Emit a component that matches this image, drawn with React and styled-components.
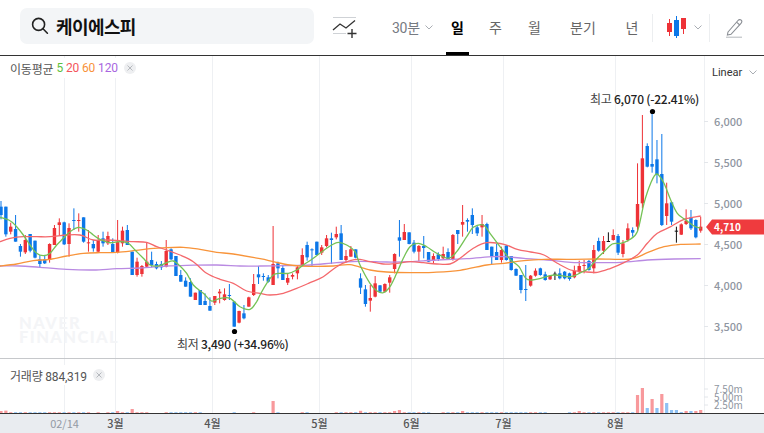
import React from 'react';
import styled, { createGlobalStyle } from 'styled-components';

const FONT = `"Noto Sans CJK KR", "Noto Sans", sans-serif`;
const UI_FONT = `Roboto, "Noto Sans CJK KR", sans-serif`;

const GlobalStyle = createGlobalStyle`
    html, body {
        margin: 0;
        padding: 0;
        background: #fff;
        overflow: hidden;
    }
    body {
        font-family: ${FONT};
    }
`;

const Page = styled.div`
    width: 764px;
    height: 433px;
    display: flex;
    flex-direction: column;
    overflow: hidden;
`;

const Header = styled.header`
    flex: none;
    display: flex;
    align-items: center;
    padding-left: 20px;
    box-sizing: border-box;
    border-bottom: 1px solid #333;
    height: 56px;
`;

const SearchBar = styled.div`
    width: 294px;
    height: 36px;
    margin-top: -4px;
    border-radius: 7px;
    background: #f3f5f7;
    display: flex;
    align-items: center;
    padding-left: 10px;
    gap: 6px;
    box-sizing: border-box;
`;

const SearchText = styled.span`
    font-size: 18px;
    font-weight: 700;
    color: #111;
    letter-spacing: -0.6px;
`;

const AddChart = styled.button`
    width: 26px;
    height: 24px;
    margin: 0 0 0 18px;
    padding: 0;
    border: 0;
    background: none;
    display: flex;
`;

const Interval = styled.div`
    margin: -1px 0 0 34px;
    width: 45.5px;
    flex: none;
    display: flex;
    align-items: center;
    gap: 5px;
    font-family: ${UI_FONT};
    font-size: 14px;
    color: #777b82;
    letter-spacing: -0.3px;
`;

const Tabs = styled.nav`
    display: flex;
    height: 100%;
`;

const Tab = styled.div`
    position: relative;
    width: ${p => p.$w}px;
    display: flex;
    justify-content: center;
    align-items: center;
    padding-bottom: 2px;
    box-sizing: border-box;
    font-size: 14px;
    font-weight: ${p => (p.$active ? 700 : 400)};
    color: ${p => (p.$active ? '#000' : '#666')};

    &::after {
        content: '';
        display: ${p => (p.$active ? 'block' : 'none')};
        position: absolute;
        left: 8.5px;
        right: 8.5px;
        bottom: 0;
        height: 3px;
        background: #000;
    }
`;

const Divider = styled.i`
    width: 1px;
    height: 28px;
    margin-left: ${p => p.$shift || 0}px;
    background: #eceef0;
    flex: none;
`;

const ChartType = styled.div`
    width: 56px;
    display: flex;
    align-items: center;
    padding-left: 14px;
    gap: 4px;
    box-sizing: border-box;
`;

const Pen = styled.div`
    margin: 0 0 0 15px;
    display: flex;
`;

const Chart = styled.main`
    position: relative;
    flex: 1;
    display: flex;
    flex-direction: column;
`;

const Pane = styled.svg`
    display: block;
    flex: none;
    width: 764px;
    height: ${p => p.$h}px;
`;

const Legend = styled.div`
    position: absolute;
    left: ${p => p.$left}px;
    top: ${p => p.$top}px;
    padding: 0 0 0 10px;
    height: 20px;
    display: flex;
    align-items: center;
    gap: 3px;
    font-family: ${UI_FONT};
    font-size: 12px;
    letter-spacing: -0.2px;
    color: #555;
    background: #fff;
`;

const LegendValue = styled.span`
    color: ${p => p.$color};
`;

const CloseDot = styled.span`
    width: 12px;
    height: 12px;
    margin-left: 3px;
    border-radius: 50%;
    background: #eeeff1;
    color: #b5b8bd;
    display: flex;
    align-items: center;
    justify-content: center;
`;

const ScaleSelect = styled.div`
    position: absolute;
    right: 0;
    top: 0;
    width: 59px;
    height: 25px;
    padding: 8px 0 0 7px;
    box-sizing: border-box;
    background: #fff;
    display: flex;
    align-items: center;
    gap: 7px;
    font-family: ${UI_FONT};
    font-size: 11px;
    color: #333;
`;

const Watermark = styled.div`
    position: absolute;
    left: 19px;
    top: 260px;
    font-family: "Lato", sans-serif;
    font-size: 16.5px;
    font-weight: 900;
    line-height: 14px;
    letter-spacing: 1.4px;
    color: #f4f5f7;
`;

const PriceLabel = styled.text`
    font-family: ${FONT};
    font-size: 11px;
    font-weight: 500;
    fill: #8f96a1;
`;

const VolumeLabel = styled.text`
    font-family: ${FONT};
    font-size: 10px;
    fill: #8f96a1;
`;

const Note = styled.text`
    font-family: ${FONT};
    font-size: 12px;
    font-weight: 500;
    letter-spacing: -0.25px;
    fill: #222;
`;

const NoteLead = styled.tspan`
    font-weight: 400;
    fill: #444;
`;

const TagText = styled.text`
    font-family: ${FONT};
    font-size: 10px;
    font-weight: 700;
    fill: #fff;
`;

const TimeAxis = styled.svg`
    display: block;
    width: 764px;
    height: 20px;
    background: #e9ecf0;
    border-top: 1px solid #333;
    box-sizing: border-box;
`;

const TimeLabel = styled.text`
    font-family: ${FONT};
    font-size: 11px;
    text-anchor: middle;
    font-weight: ${p => (p.$dim ? 400 : 500)};
    fill: ${p => (p.$dim ? '#949aa4' : '#555')};
`;

const UP = '#ee3237';
const DOWN = '#0c77e8';
const COLORS = { r: UP, b: DOWN, k: '#111' };

const GRID_X = [64.5, 115.5, 212.5, 319.5, 411.5, 503.5, 615.5];
const PRICES = [['6,000', 121.5], ['5,500', 162.5], ['5,000', 203.5], ['4,500', 244.5], ['4,000', 285.5], ['3,500', 326.5]];
const MONTHS = [['02/14', 64.5, true], ['3월', 115.5], ['4월', 212.5], ['5월', 319.5], ['6월', 411.5], ['7월', 503.5], ['8월', 615.5]];

// values read off the reference at 3x: colour, high, body top, body bottom, low
const SEG_A = [
    ['b',33,50,75,88],['b',50,50,133,140],['r',98,110,125,133],['b',75,117,155,155],['b',162,168,185,200],
    ['r',135,150,187,192],['b',132,132,182,187],['b',152,152,203,205],['b',195,208,222,232],['b',195,208,220,222],
    ['r',160,162,210,218],['r',105,114,165,165],['r',85,97,105,138],['b',95,97,163,165],['r',100,114,162,200],
    ['b',55,90,93,120],['r',70,90,93,125],['b',82,82,155,158],['r',120,157,160,185],['b',150,162,175,185],
    ['r',135,150,185,187],['b',125,145,160,170],['r',125,138,160,165],['b',145,162,187,187],['r',90,155,188,190],
    ['r',110,122,160,170],['b',105,120,165,165],['b',185,185,255,255],['r',203,215,255,260],['r',225,228,252,260],
    ['r',158,215,230,232],['b',185,210,225,232],['b',215,222,235,238],['b',213,222,232,240],['r',150,183,230,232],
    ['b',175,178,208,210],['b',198,198,258,258],['b',240,255,275,275],['b',262,272,290,290],['b',265,276,320,320],
    ['r',308,308,330,330],['b',300,300,345,345],['b',310,333,345,345],['b',322,348,362,362],['r',318,318,338,345],
    ['r',297,305,310,340],['r',295,313,330,332],['b',282,315,318,330],['b',335,335,410,410],['r',362,363,398,400],
    ['b',345,370,385,388],['r',320,322,350,350],['r',252,282,315,318],['b',228,253,262,282],
    ['b',250,258,260,272],['b',255,262,275,278],['r',108,222,285,285],['b',215,220,235,265],['b',225,234,270,270],
    ['r',250,264,278,285],['r',250,255,260,268],['r',225,232,250,268],['r',175,195,225,228],['b',155,165,202,212],
    ['b',175,178,180,228],['b',155,155,195,195],['r',165,172,188,195],['r',135,145,168,172],['b',128,145,150,222],
    ['r',110,132,142,148],['b',105,130,210,210],['r',180,198,210,218],['r',168,178,200,200],['b',178,178,203,205],
    ['b',250,265,293,312],['b',285,298,342,350],['r',285,324,332,365],['r',258,280,320,322],['b',285,286,305,308],
    ['r',280,282,305,308],['r',255,262,278,308],['r',190,192,237,250],['b',90,142,152,200],['r',102,126,150,150],
    ['b',127,127,162,163],['b',150,158,185,190],['r',165,168,185,213],['b',138,168,174,205],['b',186,186,215,216],
    ['r',190,198,213,220],['b',187,193,207,213],['r',170,192,205,208],['b',175,186,208,210],['r',132,135,208,212],
    ['b',120,120,132,162],['r',45,96,104,140],['b',85,90,95,125],['b',55,75,105,132],['b',108,112,130,138],
    ['r',75,102,112,140],['b',98,102,180,180],['b',170,170,200,222],['b',162,186,210,210],['r',170,180,210,218],
];
const SEG_B = [
    ['b',435,437,480,482],['b',468,468,510,512],['b',505,507,527,528],['b',525,525,570,580],['b',495,567,569,603],
    ['r',525,527,557,560],['r',505,512,527,530],['b',503,505,525,527],['b',515,523,540,542],['r',525,527,538,540],
    ['k',515,521,523,540],['b',505,520,535,538],['b',513,515,535,538],['b',518,520,537,542],['r',497,513,532,535],
    ['r',482,498,515,520],['r',480,495,497,520],['b',480,483,510,512],['r',435,450,505,520],['b',413,423,452,455],
    ['r',408,423,452,462],['k',397,423,425,425],['r',388,405,420,422],['b',402,408,458,465],['r',420,430,462,472],
    ['r',370,385,420,425],['b',382,390,398,410],['r',190,312,380,395],['r',45,175,310,325],['b',130,138,200,202],
    ['b',35,192,200,218],['b',120,178,225,250],['b',102,222,375,378],['r',248,310,348,375],['b',305,307,365,375],
    ['k',380,392,394,428],['r',370,373,404,405],['r',328,362,372,375],['b',330,352,385,390],['b',358,360,412,415],
    ['r',350,380,392,398],
];

const readRows = (rows, base) => rows.map(([c, h, t, b, l]) => ({
    color: c,
    high: base + h / 3,
    top: base + t / 3,
    bottom: base + b / 3,
    low: base + l / 3,
}));

const candles = [...readRows(SEG_A, 190), ...readRows(SEG_B, 100)].map((c, i) => ({ ...c, x: 1 + i * 4.859 }));

const pts = (list, ox, oy) => list.map(([x, y]) => [ox + x / 3, oy + y / 3]);

const MA5 = [
    ...pts([[0,82],[30,92],[50,110],[70,135],[90,165],[110,190],[130,197],[150,190],[170,165],[190,145],[210,125],[235,112],[260,120],[280,135],[300,148],[330,158],[360,155],[385,160],[405,180],[430,205],[450,225],[475,228],[500,218],[520,213],[540,228],[560,250],[580,285],[610,310],[635,333],[660,325],[690,325],[720,350],[750,358],[770,335]], 0, 190),
    ...pts([[0,315],[20,280],[40,255],[60,250],[85,250],[110,240],[130,225],[160,205],[190,182],[215,165],[235,157],[260,165],[285,185],[300,225],[330,280],[350,302],[370,308],[390,290],[410,250],[430,205],[450,170],[475,160],[500,170],[530,190],[565,205],[590,185],[620,140],[640,112],[670,105],[690,130],[720,170]], 260, 190),
    ...pts([[0,455],[20,480],[45,500],[65,535],[85,540],[110,535],[150,525],[200,530],[230,518],[255,505],[275,480],[300,455],[325,432],[350,430],[375,420],[400,395],[420,310],[440,250],[458,222],[480,250],[500,300],[520,340],[545,360],[570,378],[590,385]], 504, 100),
];
const MA20 = [
    ...pts([[0,155],[30,145],[70,140],[110,140],[150,140],[200,135],[240,135],[280,150],[320,150],[360,152],[400,155],[440,157],[470,170],[500,180],[540,195],[580,215],[620,250],[660,268],[700,280],[740,303]], 0, 190),
    ...pts([[0,310],[30,315],[70,310],[110,295],[150,278],[190,260],[230,230],[270,212],[300,208],[330,215],[370,222],[410,220],[450,215],[490,218],[530,222],[570,222],[600,205],[640,175],[680,158]], 260, 190),
    ...pts([[0,433],[40,448],[80,456],[120,465],[160,490],[200,510],[240,515],[280,517],[320,505],[360,488],[400,465],[430,430],[460,400],[500,380],[540,358],[590,348]], 504, 100),
];
const MA60 = [
    ...pts([[0,228],[50,222],[100,212],[150,208],[200,198],[250,190],[300,188],[350,187],[400,182],[450,176],[500,173],[550,172],[600,178],[650,187],[700,192]], 0, 190),
    ...pts([[0,206],[40,215],[90,225],[150,229],[220,228],[270,224],[330,240],[380,246],[450,248],[520,247],[600,241],[680,225]], 260, 190),
    ...pts([[0,490],[60,482],[120,478],[200,478],[280,477],[380,477],[430,458],[480,440],[530,433],[590,432]], 504, 100),
];
const MA120 = [
    ...pts([[0,228],[60,228],[120,232],[200,238],[280,240],[350,236],[420,234],[500,228],[560,226],[650,225],[720,228]], 0, 190),
    ...pts([[0,228],[80,227],[150,225],[230,218],[300,214],[380,216],[450,215],[530,210],[620,206],[700,200]], 260, 190),
    ...pts([[0,470],[60,475],[130,480],[200,487],[270,488],[350,487],[430,480],[510,477],[590,476]], 504, 100),
];

// catmull-rom through the read points
const smooth = list => {
    let d = `M${list[0][0].toFixed(1)} ${list[0][1].toFixed(1)}`;
    for (let i = 0; i < list.length - 1; i++) {
        const p0 = list[i - 1] || list[i];
        const p1 = list[i];
        const p2 = list[i + 1];
        const p3 = list[i + 2] || p2;
        const c1x = p1[0] + (p2[0] - p0[0]) / 6;
        const c1y = p1[1] + (p2[1] - p0[1]) / 6;
        const c2x = p2[0] - (p3[0] - p1[0]) / 6;
        const c2y = p2[1] - (p3[1] - p1[1]) / 6;
        d += `C${c1x.toFixed(1)} ${c1y.toFixed(1)} ${c2x.toFixed(1)} ${c2y.toFixed(1)} ${p2[0].toFixed(1)} ${p2[1].toFixed(1)}`;
    }
    return d;
};

const LINES = [
    [MA120, '#b98ae2'],
    [MA60, '#f8943a'],
    [MA20, '#f4686c'],
    [MA5, '#74c255'],
];

const VOL_GAPS = new Set([19, 21, 31, 32, 33, 42, 43, 44, 45, 46, 47, 49, 50, 51, 53, 54, 55, 58, 59, 60, 61, 64, 65, 66, 67, 68, 89, 90, 113, 114, 115, 116]);
const VOL_BIG = {
    0: ['r', 2], 1: ['r', 2.4], 24: ['r', 2], 27: ['r', 4], 56: ['r', 12], 74: ['r', 2.2], 81: ['r', 2], 82: ['r', 3],
    95: ['r', 2], 119: ['r', 2], 131: ['r', 18], 132: ['r', 25], 133: ['b', 5], 134: ['r', 14], 135: ['b', 5], 136: ['r', 19],
    137: ['b', 10], 138: ['b', 3], 139: ['b', 3], 140: ['b', 1], 141: ['r', 2], 142: ['b', 2], 143: ['r', 2], 144: ['r', 3],
};

const volumes = candles.map((c, i) => {
    if (VOL_GAPS.has(i)) return null;
    const big = VOL_BIG[i];
    return big ? { x: c.x, color: big[0], h: big[1] } : { x: c.x, color: c.color === 'b' ? 'b' : 'r', h: 0.8 };
}).filter(Boolean);

const Chevron = () => (
    <svg width="8" height="5" viewBox="0 0 8 5" fill="none">
        <path d="M0.5 0.5L4 4L7.5 0.5" stroke="#a9adb3" strokeWidth="1" />
    </svg>
);

const CloseIcon = () => (
    <svg width="6" height="6" viewBox="0 0 6 6" fill="none">
        <path d="M0.5 0.5L5.5 5.5M5.5 0.5L0.5 5.5" stroke="currentColor" strokeWidth="1" />
    </svg>
);

const PricePane = () => (
    <Pane $h={302} viewBox="0 56 764 302">
        {GRID_X.map(x => <line key={x} x1={x} x2={x} y1={56} y2={358} stroke="#eef0f3" />)}
        <line x1={704.5} x2={704.5} y1={56} y2={358} stroke="#eef0f3" />
        {PRICES.map(([t, y]) => (
            <g key={t}>
                <line x1={704} x2={708} y1={y} y2={y} stroke="#e3e6ea" />
                <PriceLabel x={714} y={y + 4}>{t}</PriceLabel>
            </g>
        ))}
        {candles.map((c, i) => (
            <g key={i} fill={COLORS[c.color]}>
                <rect x={c.x - 0.5} y={c.high} width={1} height={Math.max(c.low - c.high, 1)} />
                <rect x={c.x - 1.7} y={c.top} width={3.4} height={Math.max(c.bottom - c.top, 1)} />
            </g>
        ))}
        {LINES.map(([list, color]) => (
            <path key={color} d={smooth(list)} fill="none" stroke={color} strokeWidth="1.3" />
        ))}
        <circle cx={652.5} cy={111.5} r={2.6} fill="#000" />
        <Note x={590} y={104}><NoteLead>최고 </NoteLead>6,070 (-22.41%)</Note>
        <circle cx={234.5} cy={331.5} r={2.6} fill="#000" />
        <Note x={177} y={349}><NoteLead>최저 </NoteLead>3,490 (+34.96%)</Note>
        <path d="M706 227L712 219.5H764V234.5H712Z" fill="#ef3b3e" />
        <TagText x={714} y={230.5}>4,710</TagText>
    </Pane>
);

const VolumePane = () => (
    <Pane $h={55} viewBox="0 358 764 55">
        <line x1={0} x2={764} y1={358.5} y2={358.5} stroke="#c6c8cb" />
        {GRID_X.map(x => <line key={x} x1={x} x2={x} y1={359} y2={413} stroke="#eef0f3" />)}
        <line x1={704.5} x2={704.5} y1={359} y2={413} stroke="#eef0f3" />
        {volumes.map((v, i) => (
            <rect key={i} x={v.x - 1.6} y={413 - v.h} width={3.2} height={v.h} fill={v.color === 'b' ? '#8ec1f4' : '#f8999c'} />
        ))}
        {[['7.50m', 389], ['5.00m', 397], ['2.50m', 405]].map(([t, y]) => (
            <g key={t}>
                <line x1={704} x2={708} y1={y} y2={y} stroke="#e3e6ea" />
                <VolumeLabel x={714} y={y + 3.5}>{t}</VolumeLabel>
            </g>
        ))}
    </Pane>
);

const App = () => (
    <Page>
        <GlobalStyle />
        <Header>
            <SearchBar>
                <svg width="20" height="20" viewBox="0 0 20 20" fill="none" stroke="#222" strokeWidth="1.6">
                    <circle cx="8.6" cy="8.4" r="6" />
                    <path d="M13 12.8L17.4 17.2" strokeLinecap="round" />
                </svg>
                <SearchText>케이에스피</SearchText>
            </SearchBar>
            <AddChart>
                <svg width="26" height="24" viewBox="0 0 26 24" fill="none">
                    <path d="M1 1.5H24M1 17.5H14" stroke="#cfd2d6" strokeWidth="1.2" />
                    <path d="M1 14L8 8L14 12L23 4.5" stroke="#333" strokeWidth="1.3" />
                    <path d="M20 13V22M15.5 17.5H24.5" stroke="#333" strokeWidth="1.4" />
                </svg>
            </AddChart>
            <Interval>30분 <Chevron /></Interval>
            <Tabs>
                <Tab $w={40} $active>일</Tab>
                <Tab $w={36}>주</Tab>
                <Tab $w={42}>월</Tab>
                <Tab $w={55}>분기</Tab>
                <Tab $w={43}>년</Tab>
            </Tabs>
            <Divider $shift={-2} />
            <ChartType>
                <svg width="23" height="23" viewBox="0 0 23 23">
                    <path d="M2.5 3V20" stroke="#ee3237" />
                    <rect x="0" y="7" width="5" height="9" fill="#ee3237" />
                    <path d="M9.5 0V22" stroke="#0c77e8" />
                    <rect x="7" y="4" width="5" height="16" fill="#0c77e8" />
                    <path d="M16.5 2V18" stroke="#ee3237" />
                    <rect x="14" y="2" width="5" height="11" fill="#ee3237" />
                </svg>
                <Chevron />
            </ChartType>
            <Divider />
            <Pen>
                <svg width="18" height="20" viewBox="0 0 18 20" fill="none" stroke="#8a8e94" strokeWidth="1.1">
                    <path d="M3 14L13 2.5C14 1.4 15.4 1.4 16.2 2.2C17 3 17 4.2 16 5.3L6 16.3L2.4 17Z" />
                    <path d="M11.5 4.2L14.8 7" />
                    <path d="M1 19.2H17" stroke="#b9bcc0" />
                </svg>
            </Pen>
        </Header>
        <Chart>
            <PricePane />
            <VolumePane />
            <TimeAxis viewBox="0 0 764 19">
                {MONTHS.map(([t, x, dim]) => (
                    <TimeLabel key={t} x={x} y={13.5} $dim={dim}>{t}</TimeLabel>
                ))}
            </TimeAxis>
            <Legend $left={0} $top={2}>
                이동평균
                <LegendValue $color="#5cc13c">5</LegendValue>
                <LegendValue $color="#f4555a">20</LegendValue>
                <LegendValue $color="#f8923a">60</LegendValue>
                <LegendValue $color="#a866e0">120</LegendValue>
                <CloseDot><CloseIcon /></CloseDot>
            </Legend>
            <ScaleSelect>Linear <Chevron /></ScaleSelect>
            <Watermark>NAVER<br />FINANCIAL</Watermark>
            <Legend $left={0} $top={309}>
                거래량 884,319
                <CloseDot><CloseIcon /></CloseDot>
            </Legend>
        </Chart>
    </Page>
);

export default App;
